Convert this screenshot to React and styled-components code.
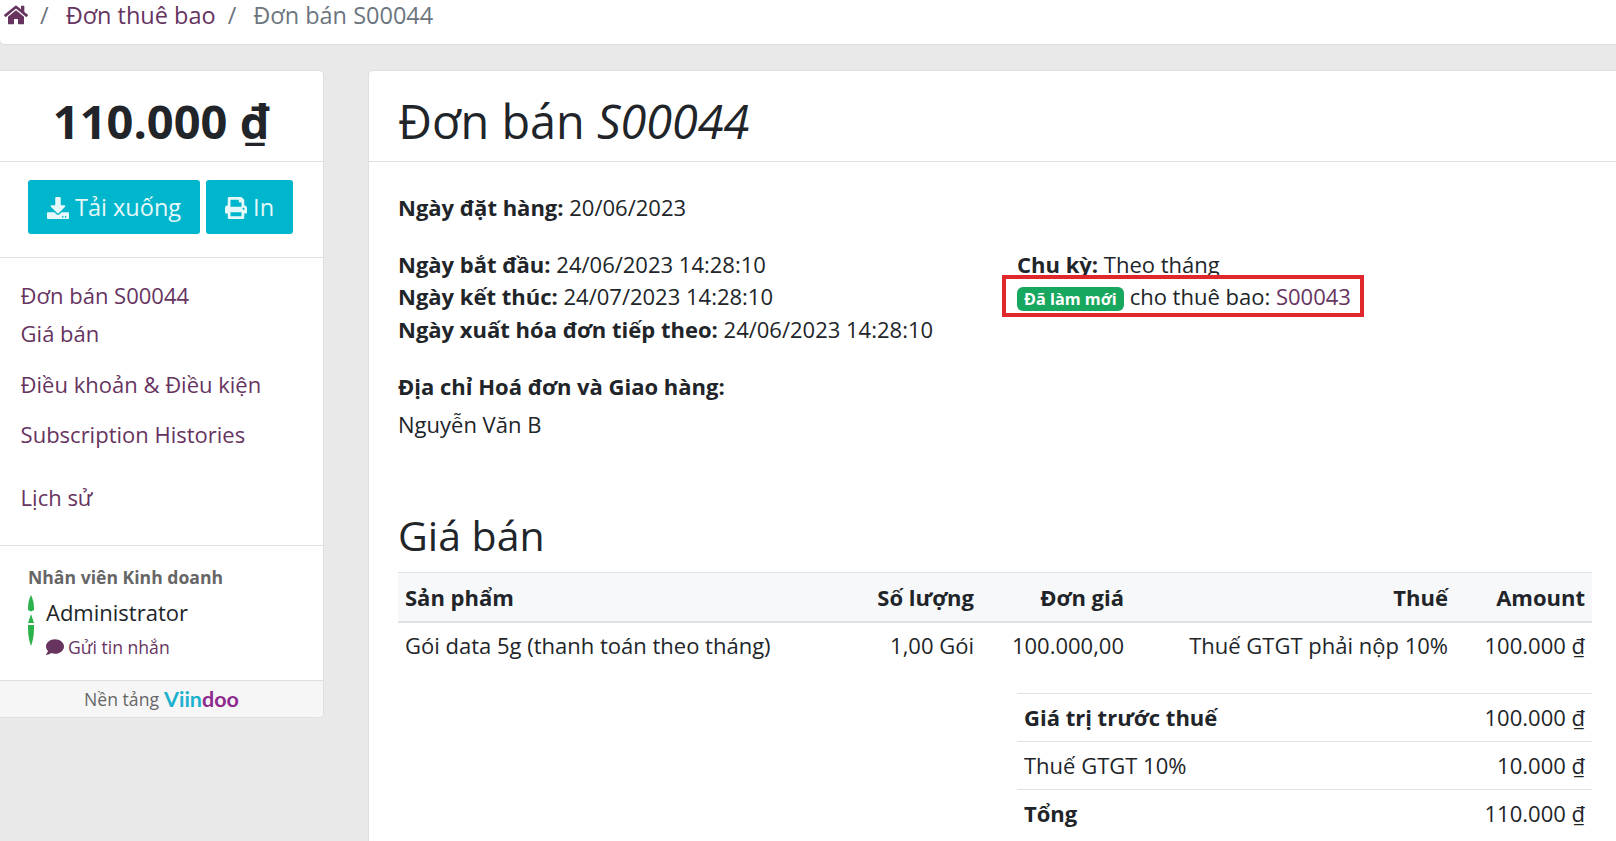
import styled, { createGlobalStyle } from 'styled-components';
import { FaHome, FaDownload, FaPrint, FaComment } from 'react-icons/fa';

const GlobalStyle = createGlobalStyle`
  html, body {
    margin: 0;
    height: 100%;
    overflow: hidden;
  }
  body {
    background: #e9e9e9;
    color: #212529;
    font-family: "Open Sans", "Noto Sans", sans-serif;
    font-size: 22px;
    line-height: 1.5;
  }
  *, *::after {
    box-sizing: border-box;
  }
`;

const Page = styled.div`
  height: 841px;
  overflow: hidden;
`;

const Breadcrumb = styled.nav`
  display: flex;
  align-items: center;
  height: 45px;
  padding: 0 0 14px 4px;
  background: #fff;
  border-bottom: 1px solid #dcdcdc;
  border-bottom-left-radius: 5px;
  font-size: 23.5px;
  line-height: 30px;
`;

const Crumb = styled.a`
  color: ${p => (p.$active ? '#6c757d' : '#66345f')};
  display: flex;
  align-items: center;
`;

const Slash = styled.span`
  color: #6c757d;
  margin: 0 17px 0 12px;
`;

const Content = styled.div`
  display: flex;
  align-items: flex-start;
  gap: 44px;
  margin-top: 25px;
`;

const Sidebar = styled.aside`
  width: 324px;
  flex: none;
  background: #fff;
  border: 1px solid #dfdfdf;
  border-left: 0;
  border-radius: 0 5px 5px 0;
`;

const Price = styled.div`
  height: 91px;
  text-align: center;
  font-size: 47px;
  font-weight: 700;
  line-height: 100px;
  border-bottom: 1px solid #dfdfdf;
`;

const Actions = styled.div`
  display: flex;
  gap: 6px;
  height: 96px;
  padding: 18px 0 0 28px;
  border-bottom: 1px solid #dfdfdf;
`;

const ActionButton = styled.a`
  display: flex;
  align-items: center;
  gap: 6px;
  height: 54px;
  padding: 2px 19px 0;
  background: #00b6cc;
  color: #e6f8fa;
  font-size: 23.5px;
  border-radius: 3px;
`;

const SideNav = styled.nav`
  display: flex;
  flex-direction: column;
  padding: 21px 0 0 20.6px;
  height: 288px;
  border-bottom: 1px solid #dfdfdf;
`;

const SideLink = styled.a`
  color: #66345f;
  font-size: 22px;
  line-height: 33px;
  margin-top: ${p => p.$gap || 0}px;
`;

const Seller = styled.div`
  height: 134px;
  padding: 18px 0 0 28px;
`;

const SellerTitle = styled.div`
  color: #666;
  font-size: 17.6px;
  font-weight: 700;
  line-height: 26px;
`;

const SellerRow = styled.div`
  display: flex;
  gap: 12px;
  margin-top: 5px;
`;

const SellerName = styled.div`
  font-size: 22px;
  line-height: 34px;
`;

const MessageLink = styled.a`
  display: flex;
  align-items: center;
  gap: 4px;
  margin-top: 4px;
  color: #66345f;
  font-size: 17.6px;
  line-height: 28px;
`;

const SideFooter = styled.div`
  display: flex;
  justify-content: center;
  align-items: center;
  gap: 5px;
  height: 37px;
  background: #f6f6f6;
  border-top: 1px solid #dfdfdf;
  border-radius: 0 0 5px 0;
  color: #666;
  font-size: 17.6px;
`;

const Logo = styled.span`
  font-family: "Lato", sans-serif;
  font-size: 21.5px;
  font-weight: 700;
  color: #8e2a8e;
`;

const LogoPart = styled.span`
  color: #1cb1cf;
`;

const Main = styled.main`
  flex: 1;
  height: 772px;
  background: #fff;
  border: 1px solid #dfdfdf;
  border-right: 0;
  border-radius: 5px 0 0 0;
`;

const MainHeader = styled.h1`
  margin: 0;
  height: 91px;
  padding-left: 29px;
  font-size: 46.8px;
  font-weight: 400;
  line-height: 100px;
  border-bottom: 1px solid #dfdfdf;
`;

const MainBody = styled.div`
  padding: 29px 24px 0 29px;
`;

const Line = styled.div`
  line-height: 32.5px;
`;

const InfoGrid = styled.div`
  display: grid;
  grid-template-columns: 619px 1fr;
  margin-top: 24.3px;
`;

const Badge = styled.span`
  display: inline-block;
  padding: 0 7px;
  margin-right: 6px;
  background: #17a75e;
  color: #fff;
  font-size: 16.2px;
  font-weight: 700;
  line-height: 24px;
  border-radius: 6px;
`;

const Highlight = styled.div`
  position: relative;
  line-height: 32.5px;
  &::after {
    content: '';
    position: absolute;
    left: -15px;
    top: -5px;
    width: 362px;
    height: 42px;
    border: 4px solid #e0282c;
  }
`;

const TextLink = styled.a`
  color: #66345f;
`;

const AddressBlock = styled.div`
  margin-top: 24.7px;
`;

const AddressName = styled.div`
  margin-top: 6px;
  line-height: 33px;
`;

const SectionTitle = styled.h2`
  margin: 64px 0 0;
  font-size: 41px;
  font-weight: 400;
  line-height: 60px;
`;

const Table = styled.table`
  width: 1194px;
  margin-top: 7px;
  border-collapse: collapse;
  table-layout: fixed;
`;

const HeadRow = styled.tr`
  background: #f7f8fa;
  border-top: 1px solid #dee2e6;
  border-bottom: 2px solid #dee2e6;
`;

const Th = styled.th`
  height: 49px;
  padding: 0 7px;
  font-weight: 700;
  text-align: ${p => (p.$left ? 'left' : 'right')};
`;

const Td = styled.td`
  height: 47px;
  padding: 0 7px;
  text-align: ${p => (p.$left ? 'left' : 'right')};
`;

const Totals = styled.div`
  margin: 24px 0 0 619px;
  width: 575px;
`;

const TotalRow = styled.div`
  display: flex;
  justify-content: space-between;
  align-items: center;
  height: 48px;
  padding: 0 7px;
  border-top: 1px solid #dee2e6;
`;

function Avatar() {
  return (
    <svg width="6" height="51" viewBox="0 0 6 51" style={{ flex: 'none' }}>
      <path d="M3 0C4.5 3 6 7 6 13V15L3 16.5L0 15V13C0 7 1.5 3 3 0Z" fill="#2bb24c" />
      <path d="M3 19L6 28H0Z" fill="#2bb24c" />
      <path d="M0 30H6V34C6 41 4.5 47 3 51C1.5 47 0 41 0 34Z" fill="#2bb24c" />
    </svg>
  );
}

export default function App() {
  return (
    <Page>
      <GlobalStyle />
      <Breadcrumb>
        <Crumb>
          <FaHome size={24} />
        </Crumb>
        <Slash>/</Slash>
        <Crumb>Đơn thuê bao</Crumb>
        <Slash>/</Slash>
        <Crumb $active>Đơn bán S00044</Crumb>
      </Breadcrumb>
      <Content>
        <Sidebar>
          <Price>110.000 ₫</Price>
          <Actions>
            <ActionButton>
              <FaDownload size={22} />
              Tải xuống
            </ActionButton>
            <ActionButton>
              <FaPrint size={22} />
              In
            </ActionButton>
          </Actions>
          <SideNav>
            <SideLink>Đơn bán S00044</SideLink>
            <SideLink $gap={5}>Giá bán</SideLink>
            <SideLink $gap={18}>Điều khoản &amp; Điều kiện</SideLink>
            <SideLink $gap={17}>Subscription Histories</SideLink>
            <SideLink $gap={30}>Lịch sử</SideLink>
          </SideNav>
          <Seller>
            <SellerTitle>Nhân viên Kinh doanh</SellerTitle>
            <SellerRow>
              <Avatar />
              <div>
                <SellerName>Administrator</SellerName>
                <MessageLink>
                  <FaComment size={18} />
                  Gửi tin nhắn
                </MessageLink>
              </div>
            </SellerRow>
          </Seller>
          <SideFooter>
            Nền tảng
            <Logo>
              <LogoPart>Viin</LogoPart>doo
            </Logo>
          </SideFooter>
        </Sidebar>
        <Main>
          <MainHeader>
            Đơn bán <em>S00044</em>
          </MainHeader>
          <MainBody>
            <Line>
              <b>Ngày đặt hàng:</b> 20/06/2023
            </Line>
            <InfoGrid>
              <div>
                <Line>
                  <b>Ngày bắt đầu:</b> 24/06/2023 14:28:10
                </Line>
                <Line>
                  <b>Ngày kết thúc:</b> 24/07/2023 14:28:10
                </Line>
                <Line>
                  <b>Ngày xuất hóa đơn tiếp theo:</b> 24/06/2023 14:28:10
                </Line>
              </div>
              <div>
                <Line>
                  <b>Chu kỳ:</b> Theo tháng
                </Line>
                <Highlight>
                  <Badge>Đã làm mới</Badge>
                  cho thuê bao: <TextLink>S00043</TextLink>
                </Highlight>
              </div>
            </InfoGrid>
            <AddressBlock>
              <Line>
                <b>Địa chỉ Hoá đơn và Giao hàng:</b>
              </Line>
              <AddressName>Nguyễn Văn B</AddressName>
            </AddressBlock>
            <SectionTitle>Giá bán</SectionTitle>
            <Table>
              <colgroup>
                <col width="433" />
                <col width="150" />
                <col width="150" />
                <col width="324" />
                <col width="137" />
              </colgroup>
              <thead>
                <HeadRow>
                  <Th $left>Sản phẩm</Th>
                  <Th>Số lượng</Th>
                  <Th>Đơn giá</Th>
                  <Th>Thuế</Th>
                  <Th>Amount</Th>
                </HeadRow>
              </thead>
              <tbody>
                <tr>
                  <Td $left>Gói data 5g (thanh toán theo tháng)</Td>
                  <Td>1,00 Gói</Td>
                  <Td>100.000,00</Td>
                  <Td>Thuế GTGT phải nộp 10%</Td>
                  <Td>100.000 ₫</Td>
                </tr>
              </tbody>
            </Table>
            <Totals>
              <TotalRow>
                <b>Giá trị trước thuế</b>
                <span>100.000 ₫</span>
              </TotalRow>
              <TotalRow>
                Thuế GTGT 10%
                <span>10.000 ₫</span>
              </TotalRow>
              <TotalRow>
                <b>Tổng</b>
                <span>110.000 ₫</span>
              </TotalRow>
            </Totals>
          </MainBody>
        </Main>
      </Content>
    </Page>
  );
}
